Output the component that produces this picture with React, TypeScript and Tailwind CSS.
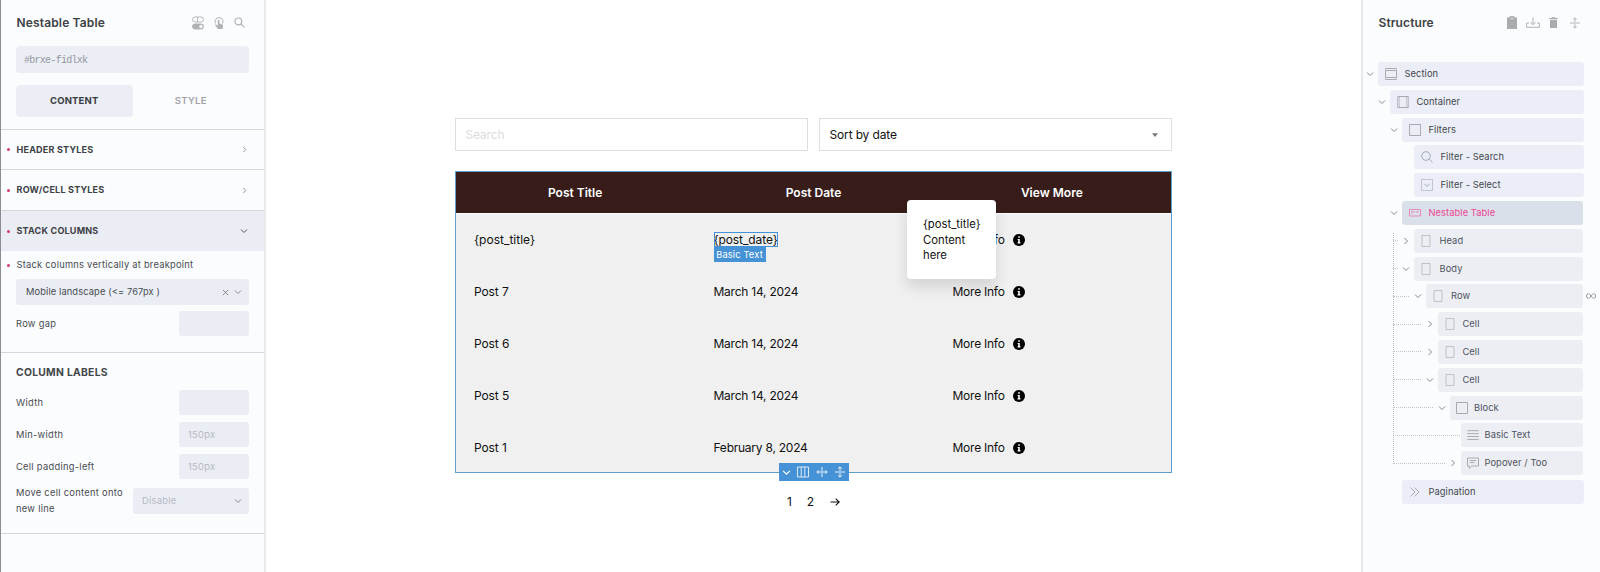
import type { ReactNode } from 'react'
import clsx from 'clsx'

type IconName =
  | 'section' | 'container' | 'block' | 'search' | 'select' | 'table'
  | 'cell' | 'text' | 'popover' | 'pagination'

type TreeItem = {
  label: string
  icon: IconName
  depth: number
  open?: boolean
  line?: string // connector width class, only inside the active element
  loop?: boolean
}

const TOP_ITEMS: TreeItem[] = [
  { label: 'Section', icon: 'section', depth: 0, open: true },
  { label: 'Container', icon: 'container', depth: 1, open: true },
  { label: 'Filters', icon: 'block', depth: 2, open: true },
  { label: 'Filter - Search', icon: 'search', depth: 3 },
  { label: 'Filter - Select', icon: 'select', depth: 3 },
]

const CHILD_ITEMS: TreeItem[] = [
  { label: 'Head', icon: 'cell', depth: 3, open: false, line: 'w-[5px]' },
  { label: 'Body', icon: 'cell', depth: 3, open: true, line: 'w-[5px]' },
  { label: 'Row', icon: 'cell', depth: 4, open: true, line: 'w-[16px]', loop: true },
  { label: 'Cell', icon: 'cell', depth: 5, open: false, line: 'w-[28px]' },
  { label: 'Cell', icon: 'cell', depth: 5, open: false, line: 'w-[28px]' },
  { label: 'Cell', icon: 'cell', depth: 5, open: true, line: 'w-[28px]' },
  { label: 'Block', icon: 'block', depth: 6, open: true, line: 'w-[40px]' },
  { label: 'Basic Text', icon: 'text', depth: 7, line: 'w-[67px]' },
  { label: 'Popover / Too', icon: 'popover', depth: 7, open: false, line: 'w-[52px]' },
]

const ROWS = [
  ['{post_title}', '{post_date}'],
  ['Post 7', 'March 14, 2024'],
  ['Post 6', 'March 14, 2024'],
  ['Post 5', 'March 14, 2024'],
  ['Post 1', 'February 8, 2024'],
]

// left edge of the chevron slot for every depth
const INDENT = ['pl-0', 'pl-[12px]', 'pl-[24px]', 'pl-[36px]']

// width reserved for the connector before the chevron
const SLOT = ['', '', '', 'w-[36px]', 'w-[48px]', 'w-[60px]', 'w-[72px]', 'w-[83px]']

// labels tighten a little with every level
const LABEL_GAP = ['', '', '', 'gap-[7.5px]', 'gap-[7px]', 'gap-[6.5px]', 'gap-[6px]', 'gap-[5.5px]']

function Chevron({ dir = 'down', className }: { dir?: 'down' | 'right'; className?: string }) {
  return (
    <svg viewBox="0 0 8 8" className={clsx('shrink-0', className ?? 'size-2')} fill="none" stroke="currentColor" strokeWidth="1">
      {dir === 'down' ? <path d="M1 2.5 4 5.5 7 2.5" /> : <path d="M2.5 1 5.5 4 2.5 7" />}
    </svg>
  )
}

function TreeIcon({ name }: { name: IconName }) {
  return (
    <svg viewBox="0 0 12 12" className="size-3 shrink-0" fill="none" stroke="currentColor" strokeWidth="0.8">
      {name === 'section' && <path d="M.5 .5h11M.5 2.5h11v7H.5zM.5 11.5h11M.5 .5v1M11.5 .5v1M.5 10.5v1M11.5 10.5v1" />}
      {name === 'container' && (
        <>
          <path d="M.8 .5h10.4v11H.8z" />
          <path d="M2.5 .5v11M9.5 .5v11" strokeWidth="0.4" />
        </>
      )}
      {name === 'block' && <path d="M.5 .5h11v11H.5z" />}
      {name === 'search' && (
        <>
          <circle cx="5" cy="5" r="4.3" />
          <path d="M8.1 8.1 11.5 11.5" />
        </>
      )}
      {name === 'select' && (
        <>
          <path d="M.5 .5h11v11H.5z" strokeDasharray="1.2 .8" />
          <path d="M3.3 4.7 6 7.4 8.7 4.7" />
        </>
      )}
      {name === 'table' && <path d="M.5 2.5h11v6.5H.5zM2 4.9h4M7.2 4.9h2.8M2 6.3h1" strokeWidth="0.7" />}
      {name === 'cell' && <path d="M2 .5h8v11H2z" opacity=".65" />}
      {name === 'text' && <path d="M.3 1.7h11.4M.3 4.6h11.4M.3 7.5h11.4M.3 10.4h11.4" />}
      {name === 'popover' && <path d="M.5 1h11v8H4.8L2.3 11.4V9H.5zM2.7 3.5h6.6M2.7 5.6h4.8" />}
      {name === 'pagination' && <path d="M1.5 1.5 6 6 1.5 10.5M5.5 1.5 10 6 5.5 10.5" />}
    </svg>
  )
}

function TreeRow({ item, active, inner }: { item: TreeItem; active?: boolean; inner?: boolean }) {
  return (
    <div className={clsx('flex h-[24px] items-center', inner || active ? 'w-[217px]' : 'w-[218px]', !inner && INDENT[item.depth])}>
      {inner && (
        <div className={clsx('flex shrink-0 pl-[27px]', SLOT[item.depth])}>
          <span className={clsx('shrink-0 border-t border-dotted border-[#c3c5c9]', item.line)} />
        </div>
      )}
      <span className="flex w-[12px] shrink-0 text-[#85888f]">
        {item.open !== undefined && <Chevron dir={item.open ? 'down' : 'right'} />}
      </span>
      <div
        className={clsx(
          'flex h-[24px] flex-1 items-center rounded-[3px] text-[9.3px] tracking-[0.08px] whitespace-nowrap',
          inner ? 'pl-[6px]' : 'pl-[7px]',
          inner ? LABEL_GAP[item.depth] : 'gap-[7.5px]',
          active ? 'bg-[#dae0e9] text-[#ec4596]' : inner ? 'bg-[#edeef4] text-[#4c5360]' : 'bg-[#ebeef6] text-[#42464d]',
        )}
      >
        <span className={active ? 'text-[#ec6ba9]' : 'text-[#95999f]'}>
          <TreeIcon name={item.icon} />
        </span>
        {item.label}
      </div>
      {item.loop && (
        <svg viewBox="0 0 10 6" className="-mr-[13px] ml-[3px] h-[6px] w-[10px] shrink-0" fill="none" stroke="#9b9da2" strokeWidth="1">
          <path d="M5 3C3.8 1.2 3.2 .8 2.4 .8a2 2.2 0 0 0 0 4.4C3.2 5.2 3.8 4.8 5 3S6.8 .8 7.6 .8a2 2.2 0 0 1 0 4.4C6.8 5.2 6.2 4.8 5 3Z" />
        </svg>
      )}
    </div>
  )
}

function Dot() {
  return <span className="mr-[6.5px] size-[3px] shrink-0 rounded-full bg-[#d23c69]" />
}

function Group({ label, open, className }: { label: string; open?: boolean; className: string }) {
  return (
    <div className={clsx('flex items-center border-t border-[#d5d7db] pr-[16px] pl-[6px]', className, open && 'bg-[#ebedf5]')}>
      <Dot />
      <span className="flex-1 text-[9px] font-bold tracking-[0.22px] text-[#3d4045]">{label}</span>
      <Chevron dir={open ? 'down' : 'right'} className={open ? 'size-2 text-[#55585e]' : 'size-[7px] text-[#85888e]'} />
    </div>
  )
}

function Field({ label, children }: { label: string; children?: ReactNode }) {
  return (
    <div className="flex h-[25px] items-center justify-between">
      <span>{label}</span>
      <div className="flex h-[25px] w-[70px] items-center rounded-[3px] bg-[#ebedf5] pl-[9px] text-[#b5b8c0]">{children}</div>
    </div>
  )
}

function SettingsPanel() {
  return (
    <aside className="flex w-[266px] shrink-0 flex-col border-r-2 border-l border-r-[#e8eaed] border-l-[#8c8c90] bg-[#fbfcfe] text-[9.3px] tracking-[0.3px] text-[#484b50]">
      <div className="flex h-[44px] items-center justify-between pt-[1px] pr-[19px] pl-[15.5px]">
        <h1 className="text-[12px] font-semibold tracking-[0.15px] text-[#3e4146]">Nestable Table</h1>
        <div className="flex items-center gap-[9px] text-[#b0b1b4]">
          <svg viewBox="0 0 12 14" className="h-[14px] w-[12px]" fill="none" stroke="currentColor" strokeWidth="0.9">
            <rect x=".5" y="1" width="11" height="5" rx="2.5" />
            <path d="M5.5 1v5" />
            <rect x=".5" y="8" width="11" height="5" rx="2.5" fill="currentColor" />
            <circle cx="9" cy="10.5" r="1.7" fill="#fbfcfe" stroke="none" />
          </svg>
          <svg viewBox="0 0 12 14" className="h-[14px] w-[12px]" fill="none" stroke="currentColor" strokeWidth="1">
            <path d="M2.5 7.5A4 4 0 1 1 9.5 7.5" />
            <path d="M5 13 2.300 9.600c-.5-.8.4-1.400 1-.9L4.800 10V4.600c0-1.200 1.700-1.200 1.700 0v3l2.700.8c.8.3 1 .8.9 1.500L9.500 13z" fill="currentColor" stroke="none" />
          </svg>
          <svg viewBox="0 0 12 12" className="size-[11px]" fill="none" stroke="currentColor" strokeWidth="1.3">
            <circle cx="4.8" cy="4.8" r="3.7" />
            <path d="M7.5 7.5 11.3 11.3" />
          </svg>
        </div>
      </div>

      <div className="mx-[15px] mt-[2px] flex h-[27px] items-center rounded-[4px] bg-[#ebeef5] pt-[1px] pl-[8px] font-['Liberation_Mono',monospace] text-[10px] tracking-[-0.73px] text-[#9497a0]">
        #brxe-fidlxk
      </div>

      <div className="mx-[15px] mt-[12px] mb-[12px] flex h-[32px] text-[9.5px] font-bold tracking-[0.15px]">
        <div className="flex flex-1 items-center justify-center rounded-[4px] bg-[#ebeef5] text-[#3a3d42]">CONTENT</div>
        <div className="flex flex-1 items-center justify-center font-semibold tracking-[0.3px] text-[#a0a2a7]">STYLE</div>
      </div>

      <Group label="HEADER STYLES" className="h-[40px]" />
      <Group label="ROW/CELL STYLES" className="h-[41px]" />
      <Group label="STACK COLUMNS" open className="h-[41px]" />

      <div className="mt-[7px] flex h-[14px] items-center pl-[6px] tracking-[0.25px]">
        <Dot />
        Stack columns vertically at breakpoint
      </div>
      <div className="mx-[15px] mt-[7px] flex h-[26px] items-center rounded-[3px] bg-[#ebedf5] pr-[7px] pl-[10px] tracking-[0.12px]">
        <span className="flex-1">Mobile landscape (&lt;= 767px )</span>
        <svg viewBox="0 0 8 8" className="mr-[5px] size-[7px]" stroke="#777a80" strokeWidth="1">
          <path d="M1 1 7 7M7 1 1 7" />
        </svg>
        <Chevron className="size-2 text-[#8a8d93]" />
      </div>
      <div className="mx-[15px] mt-[6px] mb-[16px]">
        <Field label="Row gap" />
      </div>

      <div className="flex flex-col border-t border-b border-[#d5d7db] px-[15px] pb-[15px]">
        <h2 className="mt-[12px] mb-[10px] text-[10.3px] leading-[15px] font-bold tracking-[0.3px] text-[#43464b]">COLUMN LABELS</h2>
        <div className="flex flex-col gap-[7px]">
          <Field label="Width" />
          <Field label="Min-width">150px</Field>
          <Field label="Cell padding-left">150px</Field>
        </div>
        <div className="mt-[5px] flex h-[34px] items-center justify-between">
          <p className="w-[114px] leading-[16px] whitespace-nowrap">
            Move cell content onto
            <br />
            new line
          </p>
          <div className="flex h-[26px] w-[116px] items-center justify-between rounded-[3px] bg-[#ebedf5] pr-[7px] pl-[9px] text-[#b5b8c0]">
            Disable
            <Chevron className="size-2 text-[#85888f]" />
          </div>
        </div>
      </div>
    </aside>
  )
}

function MoreInfo() {
  return (
    <span className="flex items-center gap-[8px]">
      More Info
      <svg viewBox="0 0 12 12" className="size-[12px]">
        <circle cx="6" cy="6" r="6" fill="#000" />
        <path d="M5.2 2.3h1.6v1.5H5.2zM4.6 4.9h2.200v3.400h.7v1.100H4.5V8.300h.7V6h-.6z" fill="#fff" />
      </svg>
    </span>
  )
}

function ElementToolbar() {
  return (
    <div className="absolute top-[291px] left-[323px] flex h-[18px] w-[70px] items-center justify-around bg-[#4592d6] text-white">
      <Chevron className="size-[9px]" />
      <svg viewBox="0 0 12 12" className="size-[12px]" fill="none" stroke="currentColor" strokeWidth="0.8">
        <path d="M.5 1h11v10H.5zM4.2 1v10M7.8 1v10" />
      </svg>
      <svg viewBox="0 0 12 12" className="size-[12px]" fill="none" stroke="currentColor" strokeWidth="0.9">
        <path d="M6 1v10M5 6H1M7 6h4M2.5 4.2 .8 6l1.7 1.8M9.5 4.2 11.2 6 9.5 7.8" />
      </svg>
      <svg viewBox="0 0 12 12" className="size-[12px]" fill="none" stroke="currentColor" strokeWidth="0.9">
        <path d="M1 6h10M6 4.800V1M6 7.200V11M4.200 2.600 6 .8l1.800 1.800M4.200 9.400 6 11.200 7.800 9.400" />
      </svg>
    </div>
  )
}

function Canvas() {
  return (
    <main className="flex flex-1 flex-col items-center bg-white text-[12px] text-[#111]">
      <div className="w-[717px] pt-[118px]">
        <div className="flex justify-between tracking-[-0.15px]">
          <div className="flex h-[33px] w-[353px] items-center border border-[#dedede] pl-[9.5px] text-[#dcdcdc]">Search</div>
          <div className="flex h-[33px] w-[353px] items-center justify-between border border-[#dedede] pr-[13px] pl-[9.5px]">
            Sort by date
            <svg viewBox="0 0 8 5" className="h-[4px] w-[6px]" fill="#777">
              <path d="M0 0h8L4 5z" />
            </svg>
          </div>
        </div>

        <div className="relative mt-[20px] border border-[#5b9fcc] bg-[#f0f0f0]">
          <div className="flex h-[42px] items-center border-b border-[#fff] bg-[#381c1a] font-semibold text-white">
            <span className="flex-1 text-center">Post Title</span>
            <span className="flex-1 text-center">Post Date</span>
            <span className="flex-1 text-center">View More</span>
          </div>
          {ROWS.map(([title, date], i) => (
            <div key={title} className={clsx('flex items-center', i === ROWS.length - 1 ? 'h-[50px] pt-[2px]' : 'h-[52px]')}>
              <span className={clsx('w-[239px] pl-[18px]', i > 0 && 'tracking-[-0.1px]')}>{title}</span>
              <span className="w-[239px] pl-[18.5px] tracking-[-0.24px]">
                {i === 0 ? (
                  <span className="relative inline-block leading-[15px] tracking-[-0.1px] outline outline-offset-[-1px] outline-[#4592d6]">
                    {date}
                    <span className="absolute top-[15px] left-0 flex h-[15px] w-[52px] items-center justify-center bg-[#4592d6] text-[9.3px] tracking-[0.15px] text-white">
                      Basic Text
                    </span>
                  </span>
                ) : date}
              </span>
              <span className="flex-1 pl-[18.5px] tracking-[-0.24px]"><MoreInfo /></span>
            </div>
          ))}
          <div className="absolute top-[28px] left-[451px] h-[79px] w-[89px] rounded-[4px] bg-white px-[16px] pt-[17px] text-[11.3px] leading-[15.6px] shadow-[0_8px_14px_rgba(0,0,0,0.12)]">
            {'{post_title}'} Content here
          </div>
          <ElementToolbar />
        </div>

        <div className="mt-[20px] flex items-center justify-center gap-[15px]">
          <span>1</span>
          <span>2</span>
          <svg viewBox="0 0 10 10" className="ml-[1px] size-[10px]" fill="none" stroke="currentColor" strokeWidth="1.1">
            <path d="M.5 5h8.700M5.700 1.600 9.200 5 5.700 8.400" />
          </svg>
        </div>
      </div>
    </main>
  )
}

function StructurePanel() {
  return (
    <aside className="w-[239px] shrink-0 border-l-2 border-[#e6e8ed] bg-[#fbfcfe] pl-[3px]">
      <div className="flex h-[44px] items-center justify-between pt-[1px] pr-[19px] pl-[12.5px]">
        <h1 className="text-[12px] font-semibold tracking-[0.1px] text-[#3e4146]">Structure</h1>
        <div className="flex items-center gap-[9px] text-[#aaabae]">
          <svg viewBox="0 0 10 13" className="h-[13px] w-[10px]" fill="currentColor">
            <path d="M0 1.5h2.500V.3h5v1.200H10V13H0z" />
            <path d="M3 2.8h4" stroke="#fbfcfe" strokeWidth=".6" />
          </svg>
          <svg viewBox="0 0 14 11" className="h-[11px] w-[14px]" fill="none" stroke="currentColor" strokeWidth="0.9">
            <path d="M7 .5v7M4.500 5.200 7 7.700 9.500 5.200M3 6H.6v4.300h12.800V6H11" />
          </svg>
          <svg viewBox="0 0 9 11" className="h-[11px] w-[9px]" fill="currentColor">
            <path d="M.3 1h2.400V.2h3.600V1h2.400v1.200H.3zM1 3h7v8H1z" />
          </svg>
          <svg viewBox="0 0 12 12" className="ml-[2px] size-[12px]" fill="none" stroke="currentColor" strokeWidth="0.9">
            <path d="M1 6h10M6 4.800V1M6 7.200V11M4.200 2.600 6 .8l1.800 1.800M4.200 9.400 6 11.200 7.800 9.400" />
          </svg>
        </div>
      </div>

      <div className="mt-[18px] flex flex-col gap-[3.8px]">
        {TOP_ITEMS.map((item) => <TreeRow key={item.label} item={item} />)}
        <TreeRow item={{ label: 'Nestable Table', icon: 'table', depth: 2, open: true }} active />
        <div className="relative flex flex-col gap-[3.8px]">
          <span className="absolute -top-[-4px] bottom-[11px] left-[27px] border-l border-dotted border-[#b9bbc0]" />
          {CHILD_ITEMS.map((item, i) => <TreeRow key={i} item={item} inner />)}
        </div>
        <div className="mt-[1px]">
          <TreeRow item={{ label: 'Pagination', icon: 'pagination', depth: 2 }} />
        </div>
      </div>
    </aside>
  )
}

export default function App() {
  return (
    <div className="flex h-[572px] w-[1600px] overflow-hidden font-['Inter',sans-serif]">
      <SettingsPanel />
      <Canvas />
      <StructurePanel />
    </div>
  )
}
